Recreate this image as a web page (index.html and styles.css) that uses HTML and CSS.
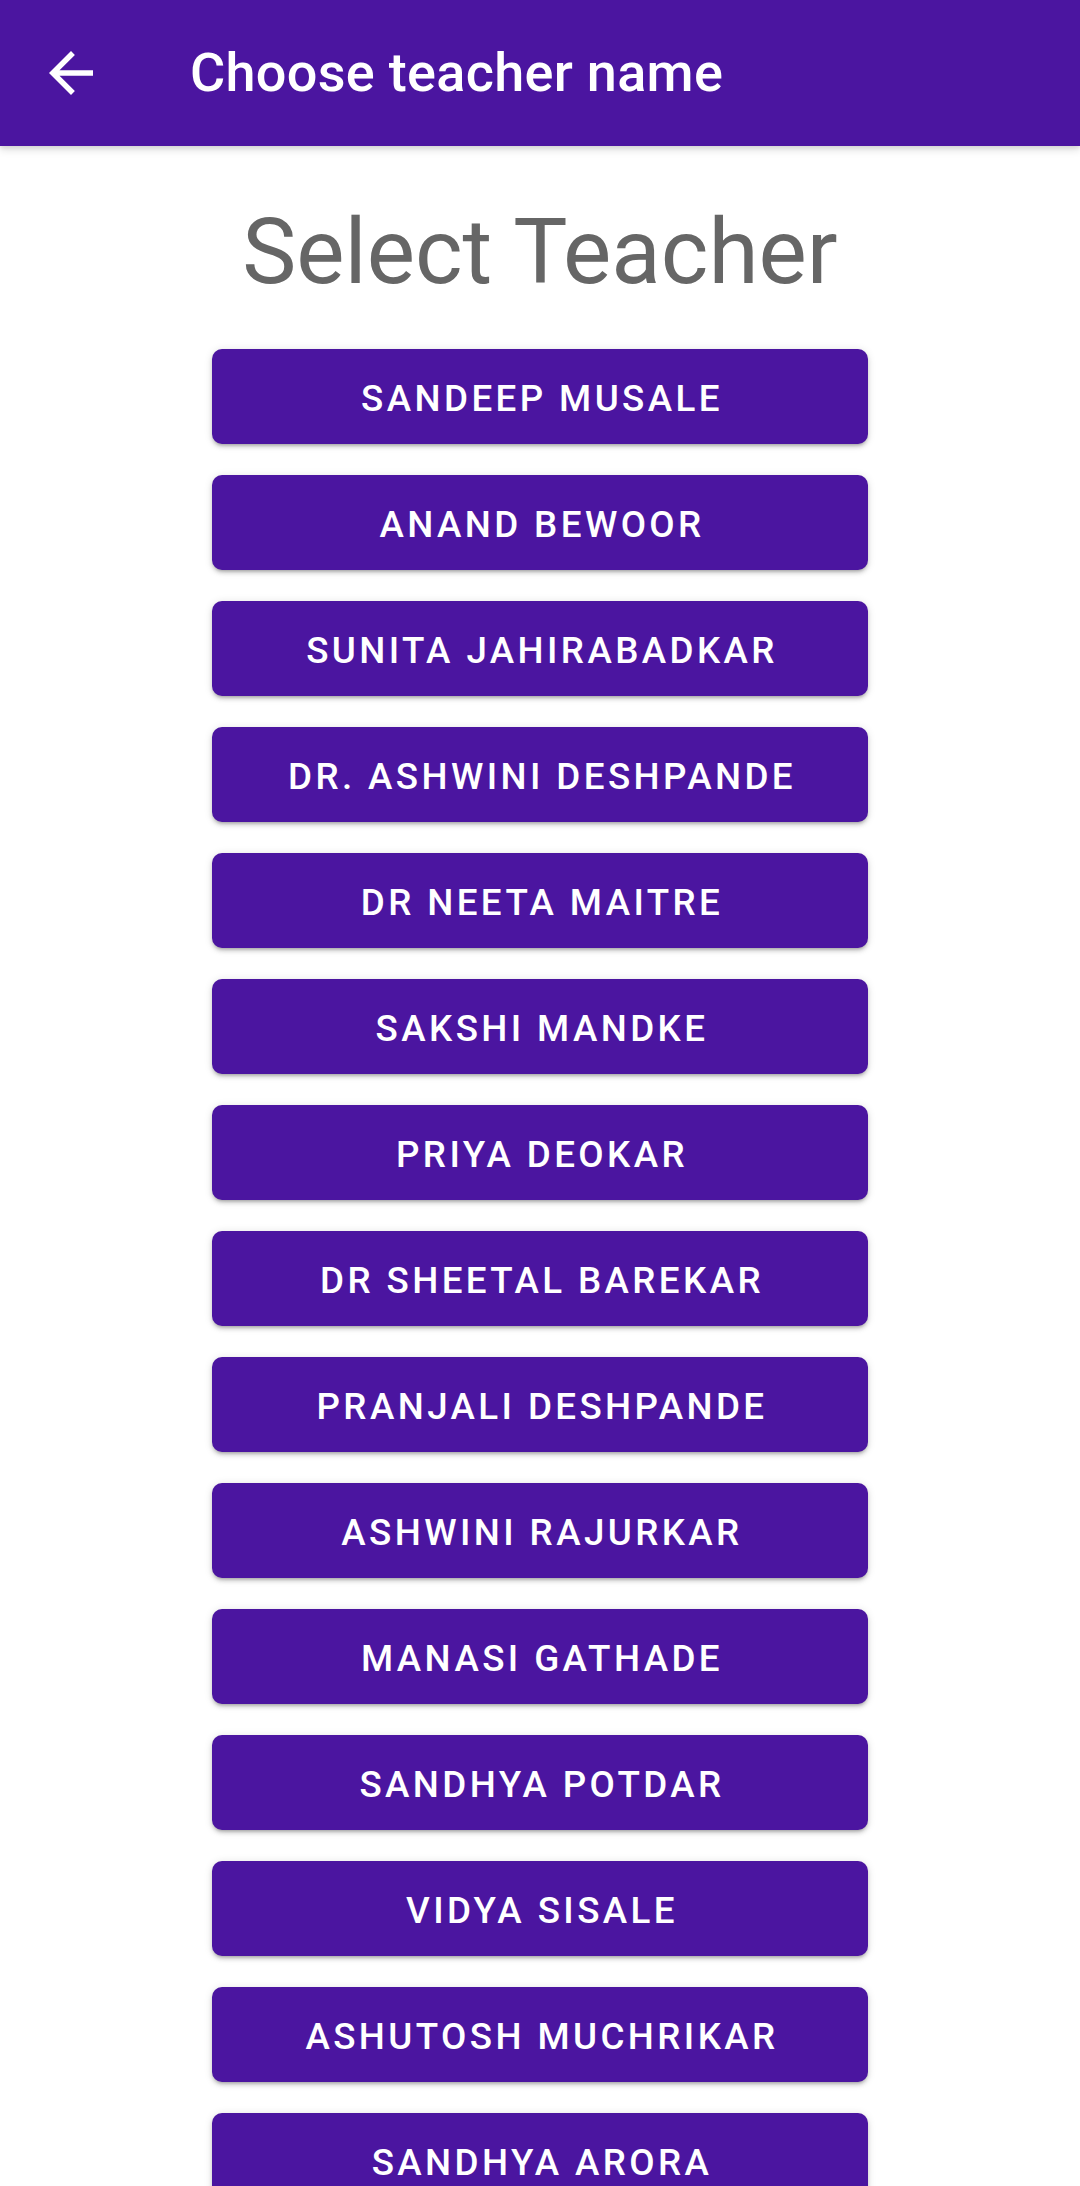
FILE: index.html
```html
<!DOCTYPE html>
<html>
<head>
<meta charset="utf-8">
<link rel="stylesheet" href="styles.css">
</head>
<body>
<header class="appbar">
  <button class="back" aria-label="Back">
    <svg viewBox="0 0 24 24" width="66" height="66"><path d="M20 11H7.83l5.59-5.59L12 4l-8 8 8 8 1.41-1.41L7.83 13H20v-2z" fill="#fff"/></svg>
  </button>
  <h1 class="appbar-title">Choose teacher name</h1>
</header>
<main class="content">
  <h2 class="heading">Select Teacher</h2>
  <div class="list">
    <button class="teacher">SANDEEP MUSALE</button>
    <button class="teacher">ANAND BEWOOR</button>
    <button class="teacher">SUNITA JAHIRABADKAR</button>
    <button class="teacher">DR. ASHWINI DESHPANDE</button>
    <button class="teacher">DR NEETA MAITRE</button>
    <button class="teacher">SAKSHI MANDKE</button>
    <button class="teacher">PRIYA DEOKAR</button>
    <button class="teacher">DR SHEETAL BAREKAR</button>
    <button class="teacher">PRANJALI DESHPANDE</button>
    <button class="teacher">ASHWINI RAJURKAR</button>
    <button class="teacher">MANASI GATHADE</button>
    <button class="teacher">SANDHYA POTDAR</button>
    <button class="teacher">VIDYA SISALE</button>
    <button class="teacher">ASHUTOSH MUCHRIKAR</button>
    <button class="teacher">SANDHYA ARORA</button>
  </div>
</main>
</body>
</html>
```
FILE: styles.css
```css
html, body {
  margin: 0;
  padding: 0;
  background: #ffffff;
  font-family: Roboto, "Noto Sans", "Liberation Sans", sans-serif;
  overflow: hidden;
  height: 2186px;
}

.appbar {
  position: relative;
  z-index: 2;
  height: 146px;
  background: #4b15a0;
  display: flex;
  align-items: center;
  box-shadow: 0 4px 8px rgba(0, 0, 0, 0.12), 0 2px 4px rgba(0, 0, 0, 0.08);
}

.back {
  width: 66px;
  height: 66px;
  margin-left: 38px;
  padding: 0;
  border: 0;
  background: transparent;
  display: flex;
  align-items: center;
  justify-content: center;
}

.back svg {
  display: block;
}

.appbar-title {
  margin: 0 0 0 86px;
  color: #ffffff;
  font-size: 54px;
  font-weight: 500;
  line-height: 60px;
  letter-spacing: 0.3px;
}

.content {
  display: flex;
  flex-direction: column;
  align-items: center;
}

.heading {
  margin: 54px 0 0 0;
  font-size: 91px;
  line-height: 104px;
  font-weight: 400;
  color: #666666;
}

.list {
  margin-top: 45px;
  display: flex;
  flex-direction: column;
  gap: 31px;
}

.teacher {
  width: 656px;
  height: 95px;
  padding: 4px 0 0 4px;
  border: 0;
  border-radius: 10px;
  background: #4b15a0;
  color: #ffffff;
  font-family: Roboto, "Noto Sans", "Liberation Sans", sans-serif;
  font-size: 36.75px;
  font-weight: 500;
  letter-spacing: 3.4px;
  line-height: 43px;
  box-shadow: 0 3px 3px -2px rgba(0, 0, 0, 0.2), 0 3px 4px 0 rgba(0, 0, 0, 0.14), 0 1px 8px 0 rgba(0, 0, 0, 0.12);
}
```
